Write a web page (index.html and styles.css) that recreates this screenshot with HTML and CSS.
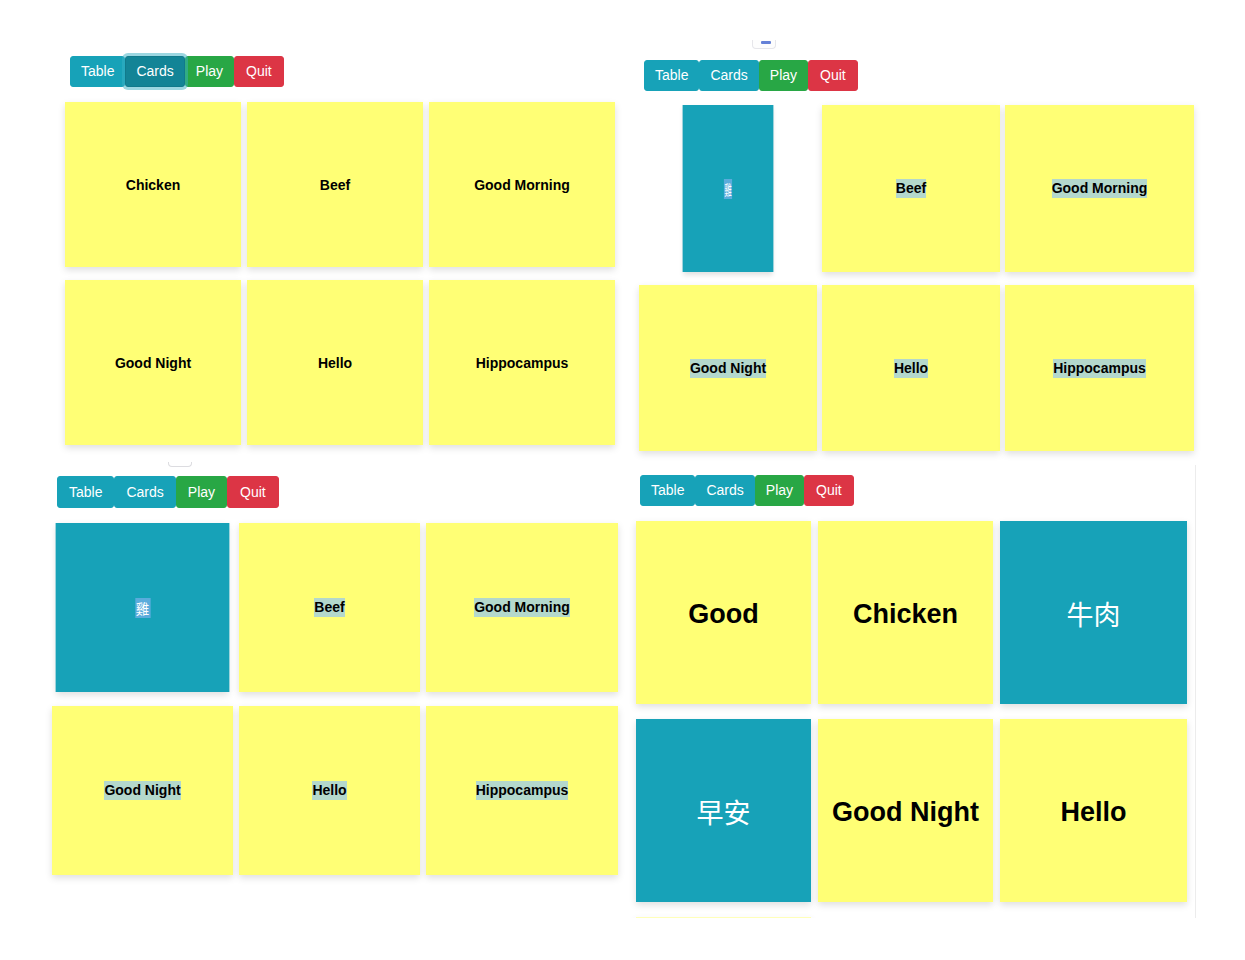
FILE: index.html
```html
<!DOCTYPE html>
<html lang="en">
<head>
<meta charset="utf-8">
<title>Flash Cards</title>
<link rel="stylesheet" href="styles.css">
</head>
<body>
<div class="collage">

  <section class="panel p1">
    <div class="toolbar">
      <button class="btn btn-info">Table</button>
      <button class="btn btn-info active">Cards</button>
      <button class="btn btn-success">Play</button>
      <button class="btn btn-danger">Quit</button>
    </div>
    <div class="grid">
      <div class="card"><span>Chicken</span></div>
      <div class="card"><span>Beef</span></div>
      <div class="card"><span>Good Morning</span></div>
      <div class="card"><span>Good Night</span></div>
      <div class="card"><span>Hello</span></div>
      <div class="card"><span>Hippocampus</span></div>
    </div>
  </section>

  <section class="panel p2">
    <div class="tab tab-blue"><i></i></div>
    <div class="toolbar">
      <button class="btn btn-info">Table</button>
      <button class="btn btn-info">Cards</button>
      <button class="btn btn-success">Play</button>
      <button class="btn btn-danger">Quit</button>
    </div>
    <div class="grid">
      <div class="card back flip"><span class="sel-dark cjk">雞</span></div>
      <div class="card"><span class="sel">Beef</span></div>
      <div class="card"><span class="sel">Good Morning</span></div>
      <div class="card"><span class="sel">Good Night</span></div>
      <div class="card"><span class="sel">Hello</span></div>
      <div class="card"><span class="sel">Hippocampus</span></div>
    </div>
  </section>

  <section class="panel p3">
    <div class="tab"></div>
    <div class="toolbar">
      <button class="btn btn-info">Table</button>
      <button class="btn btn-info">Cards</button>
      <button class="btn btn-success">Play</button>
      <button class="btn btn-danger">Quit</button>
    </div>
    <div class="grid">
      <div class="card back shrink"><span class="sel-dark cjk">雞</span></div>
      <div class="card"><span class="sel">Beef</span></div>
      <div class="card"><span class="sel">Good Morning</span></div>
      <div class="card"><span class="sel">Good Night</span></div>
      <div class="card"><span class="sel">Hello</span></div>
      <div class="card"><span class="sel">Hippocampus</span></div>
    </div>
  </section>

  <section class="panel p4">
    <div class="toolbar">
      <button class="btn btn-info">Table</button>
      <button class="btn btn-info">Cards</button>
      <button class="btn btn-success">Play</button>
      <button class="btn btn-danger">Quit</button>
    </div>
    <div class="grid big">
      <div class="card"><span>Good</span></div>
      <div class="card"><span>Chicken</span></div>
      <div class="card back"><span class="cjk">牛肉</span></div>
      <div class="card back"><span class="cjk">早安</span></div>
      <div class="card"><span>Good Night</span></div>
      <div class="card"><span>Hello</span></div>
      <div class="card peek"></div>
    </div>
  </section>

</div>
</body>
</html>
```

FILE: styles.css
```css
* { box-sizing: border-box; }

html, body {
  margin: 0;
  padding: 0;
  background: #ffffff;
}

body {
  width: 1245px;
  height: 960px;
  overflow: hidden;
  font-family: "Liberation Sans", Arial, "Noto Sans CJK TC", sans-serif;
  color: #000;
}

.collage {
  display: grid;
  grid-template-columns: 625px 620px;
  grid-template-rows: 460px 500px;
}

.panel {
  display: flex;
  flex-direction: column;
  align-items: flex-start;
}

/* toolbar */
.toolbar {
  display: flex;
  height: 31px;
}

.btn {
  font-family: "Liberation Sans", Arial, sans-serif;
  font-size: 14px;
  line-height: 21px;
  padding: 4px 10px;
  border: 1px solid transparent;
  border-radius: 3px;
  color: #fff;
  cursor: pointer;
}

.btn-info { background: #17a2b8; border-color: #17a2b8; }
.btn-success { background: #28a745; border-color: #28a745; }
.btn-danger { background: #dc3545; border-color: #dc3545; padding: 4px 11px; }

.btn.active {
  background: #138496;
  border-color: #117a8b;
  box-shadow: 0 0 0 3px rgba(58, 176, 195, 0.5);
  position: relative;
  z-index: 1;
}

/* grid of cards */
.grid {
  display: grid;
}

.card {
  background: #ffff75;
  display: flex;
  align-items: center;
  justify-content: center;
  font-size: 14px;
  font-weight: bold;
  box-shadow: 0 3px 7px rgba(0, 0, 0, 0.13);
}

.card.back {
  background: #17a2b8;
  color: #fff;
  font-weight: normal;
}

.cjk {
  font-family: "Noto Sans CJK TC", "Noto Sans CJK SC", sans-serif;
}

.sel {
  background: #b4d8cc;
  line-height: 19px;
}

.sel-dark {
  background: #5aacdc;
  font-size: 14px;
  line-height: 20px;
  padding: 0 1px;
}

/* panel 1 */
.p1 { padding: 56px 0 0 65px; }
.p1 .toolbar { margin-left: 5px; }
.p1 .grid {
  margin-top: 15px;
  grid-template-columns: 176px 176px 186px;
  grid-template-rows: 165px 165px;
  column-gap: 6px;
  row-gap: 13px;
}

/* panel 2 */
.p2 { padding: 40px 0 0 14px; }
.tab {
  width: 24px;
  height: 9px;
  border: 1px solid #e6e6ea;
  border-top: none;
  border-radius: 0 0 4px 4px;
  background: #fdfdfd;
  position: relative;
}
.p2 .tab { margin-left: 113px; }
.tab-blue i {
  position: absolute;
  left: 8px;
  top: 1px;
  width: 10px;
  height: 3px;
  background: #4a6bd0;
  border-radius: 1px;
  opacity: 0.85;
}
.p2 .toolbar { margin: 11px 0 0 5px; }
.p2 .grid {
  margin-top: 14px;
  grid-template-columns: 178px 178px 189px;
  grid-template-rows: 167px 166px;
  column-gap: 5px;
  row-gap: 13px;
}
.card.flip { transform: scaleX(0.51); }

/* panel 3 */
.p3 { padding: 2px 0 0 52px; }
.p3 .tab {
  margin-left: 116px;
  height: 5px;
  border-color: #dcdce0;
  background: transparent;
}
.p3 .toolbar { margin: 9px 0 0 5px; height: 32px; }
.p3 .btn { padding: 4px 11px; }
.p3 .btn-danger { padding: 4px 12px; }
.p3 .grid {
  margin-top: 15px;
  grid-template-columns: 181px 181px 192px;
  grid-template-rows: 169px 169px;
  column-gap: 6px;
  row-gap: 14px;
}
.card.shrink { transform: scaleX(0.96); }

/* panel 4 */
.p4 {
  margin-top: 5px;
  height: 453px;
  width: 571px;
  overflow: hidden;
  border-right: 1px solid #ececec;
  padding: 10px 0 0 11px;
}
.p4 .toolbar { margin-left: 4px; }
.p4 .grid {
  margin-top: 15px;
  grid-template-columns: 175px 175px 187px;
  grid-template-rows: 183px 183px 183px;
  column-gap: 7px;
  row-gap: 15px;
}
.grid.big .card { font-size: 27px; padding-top: 4px; }
.grid.big .card.back { font-size: 27px; padding-top: 2px; }
.card.peek { opacity: 0.5; }
```
